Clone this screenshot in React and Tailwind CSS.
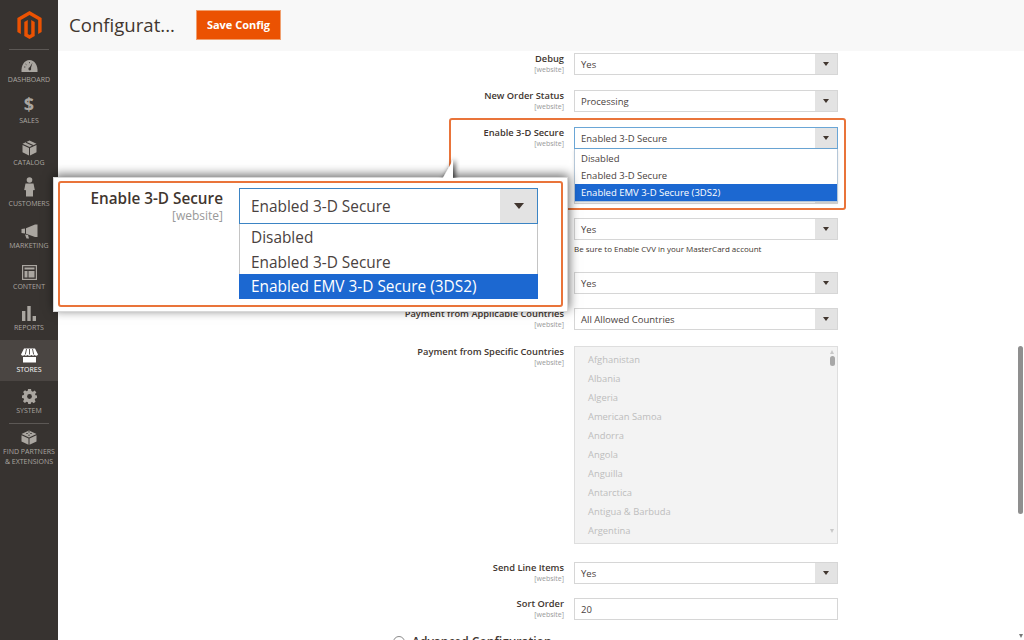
const nav = [
  { label: "DASHBOARD", icon: <DashIcon /> },
  { label: "SALES", icon: <span className="text-[18px] leading-[20px] font-bold">$</span> },
  { label: "CATALOG", icon: <BoxIcon /> },
  { label: "CUSTOMERS", icon: <PersonIcon /> },
  { label: "MARKETING", icon: <HornIcon /> },
  { label: "CONTENT", icon: <ContentIcon /> },
  { label: "REPORTS", icon: <BarsIcon /> },
  { label: "STORES", icon: <StoreIcon />, active: true },
  { label: "SYSTEM", icon: <GearIcon /> },
];

const countries = ["Afghanistan", "Albania", "Algeria", "American Samoa", "Andorra", "Angola", "Anguilla", "Antarctica", "Antigua & Barbuda", "Argentina"];

function DashIcon() {
  return (
    <svg width="17" height="14" viewBox="0 0 17 14">
      <path d="M0.5 13 C0 6 3.5 1 8.5 1 C13.5 1 17 6 16.5 13 Z" fill="currentColor" />
      <path d="M8 9.5 L11.5 3.5 L9.6 10.2 Z" fill="#373330" />
      <circle cx="8.8" cy="10" r="1.4" fill="#373330" />
      <path d="M3 8h1.4M4.5 5l1 .8M8.5 3v1.2" stroke="#373330" strokeWidth="0.8" />
    </svg>
  );
}

function BoxIcon() {
  return (
    <svg width="15" height="16" viewBox="0 0 15 16">
      <path d="M7.5 0.5 L14.5 3.8 L7.5 7 L0.5 3.8 Z" fill="currentColor" />
      <path d="M0.5 5 L7 8 V15.5 L0.5 12.2 Z" fill="currentColor" />
      <path d="M14.5 5 L8 8 V15.5 L14.5 12.2 Z" fill="currentColor" />
      <path d="M4 2.2 L11 5.4" stroke="#373330" strokeWidth="1.1" />
    </svg>
  );
}

function PersonIcon() {
  return (
    <svg width="11" height="20" viewBox="0 0 11 20">
      <circle cx="5.5" cy="3" r="2.8" fill="currentColor" />
      <path d="M1.5 6.5 H9.5 L10.8 13 L9 13.2 V19.5 H2 V13.2 L0.2 13 Z" fill="currentColor" />
    </svg>
  );
}

function HornIcon() {
  return (
    <svg width="17" height="15" viewBox="0 0 17 15">
      <path d="M0.5 5 L4 4.5 V9.5 L0.5 9 Z" fill="currentColor" />
      <path d="M5 4.3 L14 0.5 L16.5 0.5 V13 L14 13 L5 9.7 Z" fill="currentColor" />
      <path d="M4 10.5 L7 11 L8 14.5 L5.5 14.5 Z" fill="currentColor" />
    </svg>
  );
}

function ContentIcon() {
  return (
    <svg width="15" height="15" viewBox="0 0 15 15">
      <rect x="0.6" y="0.6" width="13.8" height="13.8" fill="none" stroke="currentColor" strokeWidth="1.2" />
      <rect x="2.5" y="2.5" width="10" height="2" fill="currentColor" />
      <rect x="2.5" y="6" width="3" height="6.5" fill="currentColor" />
      <rect x="6.5" y="6" width="6" height="6.5" fill="currentColor" />
    </svg>
  );
}

function BarsIcon() {
  return (
    <svg width="14" height="15" viewBox="0 0 14 15">
      <rect x="0" y="5" width="3.4" height="10" fill="currentColor" />
      <rect x="5.3" y="0" width="3.4" height="15" fill="currentColor" />
      <rect x="10.6" y="10" width="3.4" height="5" fill="currentColor" />
    </svg>
  );
}

function StoreIcon() {
  return (
    <svg width="17" height="15" viewBox="0 0 17 15">
      <path d="M3 0.5 H14 L17 6.5 C16 8 14.5 8 13.7 7 C12.8 8 11.4 8 10.6 7 C9.8 8 7.2 8 6.4 7 C5.6 8 4.2 8 3.3 7 C2.5 8 1 8 0 6.5 Z" fill="currentColor" />
      <path d="M5.5 1 L4.3 6.5 M8.5 1 V6.5 M11.5 1 L12.7 6.5" stroke="#4a4542" strokeWidth="0.9" />
      <path d="M2 9 H15 V14.5 H2 Z" fill="currentColor" />
    </svg>
  );
}

function GearIcon() {
  return (
    <svg width="15" height="15" viewBox="0 0 15 15">
      <path d="M6 0 H9 L9.4 2 L10.9 2.7 L12.7 1.6 L14.4 3.6 L13 5 L13.5 6.3 L15 6.5 V9 L13.3 9.4 L12.7 10.8 L13.6 12.5 L11.7 14.2 L10.1 13 L9 13.4 L8.7 15 H6.2 L5.9 13.3 L4.5 12.8 L2.9 14 L1 12.2 L2.1 10.6 L1.6 9.3 L0 9 V6.4 L1.7 6 L2.2 4.7 L1.1 3.1 L3 1.2 L4.6 2.3 L5.7 1.8 Z" fill="currentColor" />
      <circle cx="7.5" cy="7.5" r="2.4" fill="#373330" />
    </svg>
  );
}

function BrickIcon() {
  return (
    <svg width="16" height="15" viewBox="0 0 16 15">
      <path d="M8 0.5 L15.5 4 L8 7.5 L0.5 4 Z" fill="currentColor" />
      <path d="M0.5 5.2 L7.5 8.5 V14.8 L0.5 11.5 Z" fill="currentColor" />
      <path d="M15.5 5.2 L8.5 8.5 V14.8 L15.5 11.5 Z" fill="currentColor" />
      <path d="M5 3.5 h2 M9 3.5 h2 M7 5.2 h2 M7 1.9 h2" stroke="#373330" strokeWidth="0.7" />
    </svg>
  );
}

function Label({ title }) {
  return (
    <div className="w-[506px] text-right">
      <div className="text-[9.3px] leading-[12px] font-semibold text-[#41362f]">{title}</div>
      <div className="pt-[1px] text-[7px] leading-[8px] text-[#999]">[website]</div>
    </div>
  );
}

function Select({ value, focused }) {
  return (
    <div className={`flex h-[22px] w-[264px] items-stretch border ${focused ? "border-[#6aa6d6]" : "border-[#d6d6d6]"} bg-white`}>
      <div className="flex-1 pl-[6px] pt-[1px] text-[9.5px] leading-[20px] text-[#4a4240]">{value}</div>
      <div className="flex w-[22px] items-center justify-center bg-[#e3e3e3]">
        <div className="h-0 w-0 border-x-[3px] border-t-[4px] border-x-transparent border-t-[#41362f]" />
      </div>
    </div>
  );
}

function App() {
  return (
    <div className="flex h-[640px] w-[1024px] overflow-hidden bg-white font-['Open_Sans',sans-serif]">
      <aside className="flex w-[58px] shrink-0 flex-col bg-[#373330] text-[#aaa6a0]">
        <div className="flex h-[49px] shrink-0 items-start justify-center pt-[11px]">
          <svg width="25" height="28" viewBox="1.6 0 20.8 24" fill="#eb5202">
            <path d="M12 24l-4.455-2.572v-12l2.97-1.714v12.001l1.485.902 1.485-.902V7.714l2.971 1.714v12L12 24zM22.391 6v12l-2.97 1.714V7.714L12 3.43 4.574 7.714v12L1.609 18V6L12 0l10.391 6z" />
          </svg>
        </div>
        <div className="mx-[9px] h-px shrink-0 bg-[#5c5855]" />
        {nav.map((item) => (
          <div key={item.label} className={`flex h-[41.4px] shrink-0 flex-col items-center ${item.active ? "bg-[#4a4542] text-white" : ""}`}>
            <div className="flex h-[23px] items-end justify-center">{item.icon}</div>
            <div className="mt-[2px] text-[7px] leading-[10px]">{item.label}</div>
          </div>
        ))}
        <div className="mx-[9px] h-px shrink-0 bg-[#5c5855]" />
        <div className="flex flex-col items-center pt-[6px] text-center text-[7px] leading-[10px]">
          <BrickIcon />
          <div className="mt-[2px]">FIND PARTNERS</div>
          <div>&amp; EXTENSIONS</div>
        </div>
      </aside>

      <div className="flex min-w-0 flex-1 flex-col">
        <header className="flex h-[51px] shrink-0 items-center bg-[#f8f8f8] pb-[1px] pl-[11px]">
          <h1 className="w-[105px] whitespace-nowrap text-[18.6px] leading-[28px] text-[#41362f]">Configurat...</h1>
          <button className="ml-[22px] h-[30px] w-[85px] border border-[#f0a070] bg-[#eb5202] text-[11px] font-bold text-white">Save Config</button>
        </header>

        <main className="relative min-h-0 flex-1 pt-[2px]">
          <div className="flex gap-[10px]">
            <Label title="Debug" />
            <Select value="Yes" />
          </div>
          <div className="mt-[15px] flex gap-[10px]">
            <Label title="New Order Status" />
            <Select value="Processing" />
          </div>
          <div className="mt-[15px] flex gap-[10px]">
            <Label title="Enable 3-D Secure" />
            <div className="relative z-10">
              <Select value="Enabled 3-D Secure" focused />
              <div className="absolute left-0 top-[22px] h-[53px] w-[264px] border-x border-b border-[#b5c7d8] bg-white pt-[1px] text-[9.5px] leading-[17px] text-[#4a4240] shadow-sm">
                <div className="pl-[6px]">Disabled</div>
                <div className="pl-[6px]">Enabled 3-D Secure</div>
                <div className="bg-[#1c68d1] pl-[6px] text-white">Enabled EMV 3-D Secure (3DS2)</div>
              </div>
            </div>
          </div>
          <div className="mt-[33px] flex gap-[10px]">
            <Label title="Test Mode" />
            <Select value="Yes" />
          </div>
          <div className="mt-[14px] flex gap-[10px]">
            <Label title="CVV Verification" />
            <div>
              <Select value="Yes" />
              <div className="mt-[3px] text-[8px] leading-[11px] text-[#41362f]">Be sure to Enable CVV in your MasterCard account</div>
            </div>
          </div>
          <div className="mt-[18px] flex gap-[10px]">
            <Label title="Credit Card Verification" />
            <Select value="Yes" />
          </div>
          <div className="mt-[14px] flex gap-[10px]">
            <Label title="Payment from Applicable Countries" />
            <Select value="All Allowed Countries" />
          </div>
          <div className="mt-[16px] flex gap-[10px]">
            <Label title="Payment from Specific Countries" />
            <div className="relative h-[198px] w-[264px] border border-[#dedede] bg-[#f3f3f3] pl-[13px] pt-[3px] text-[9.4px] leading-[19px] text-[#bdbdbd]">
              {countries.map((c) => (
                <div key={c}>{c}</div>
              ))}
              <div className="absolute right-[3px] top-[3px] h-0 w-0 border-x-[2.5px] border-b-[4px] border-x-transparent border-b-[#c8c8c8]" />
              <div className="absolute right-[2px] top-[9px] h-[10px] w-[5px] rounded-sm bg-[#a8a8a8]" />
              <div className="absolute bottom-[10px] right-[3px] h-0 w-0 border-x-[2.5px] border-t-[4px] border-x-transparent border-t-[#c8c8c8]" />
            </div>
          </div>
          <div className="mt-[18px] flex gap-[10px]">
            <Label title="Send Line Items" />
            <Select value="Yes" />
          </div>
          <div className="mt-[14px] flex gap-[10px]">
            <Label title="Sort Order" />
            <div className="h-[22px] w-[264px] border border-[#d6d6d6] bg-white pl-[6px] pt-[1px] text-[9.5px] leading-[20px] text-[#4a4240]">20</div>
          </div>
          <div className="mt-[15px] flex items-center pl-[335px]">
            <div className="h-[12px] w-[12px] rounded-full border border-[#8a8a8a]" />
            <div className="ml-[7px] text-[12px] leading-[14px] font-semibold text-[#41362f]">Advanced Configuration</div>
          </div>

          {/* orange highlight around the real field */}
          <div className="pointer-events-none absolute left-[391px] top-[67px] z-20 h-[92px] w-[397px] rounded-[3px] border-2 border-[#e9743a]" />

          {/* zoomed callout */}
          <div className="absolute left-[-5px] top-[126px] z-30 h-[135px] w-[515px] border border-[#d8d8d8] bg-white pb-[4px] pl-[4px] pr-[4px] pt-[3px] shadow-[1px_-2px_10px_rgba(0,0,0,0.6)]">
            <svg className="absolute left-[366px] top-[-31px]" width="40" height="31" viewBox="0 0 40 31">
              <defs>
                <filter id="tip" x="0" y="0" width="40" height="40" filterUnits="userSpaceOnUse">
                  <feDropShadow dx="2" dy="-1" stdDeviation="2.5" floodColor="#000" floodOpacity="0.75" />
                </filter>
              </defs>
              <path d="M20 36 L33 13 V36 Z" fill="#fff" filter="url(#tip)" />
            </svg>
            <div className="flex h-[126px] rounded-[3px] border-2 border-[#e9743a] pl-[30px] pt-[5px]">
              <div className="w-[133px] whitespace-nowrap text-right">
                <div className="text-[15.3px] leading-[20px] font-semibold text-[#41362f]">Enable 3-D Secure</div>
                <div className="text-[12px] leading-[15px] text-[#999]">[website]</div>
              </div>
              <div className="ml-[16px] w-[299px]">
                <div className="flex h-[36px] items-stretch border border-[#3b84c4]">
                  <div className="flex-1 pl-[11px] pt-[1px] text-[15.4px] leading-[34px] text-[#4a4240]">Enabled 3-D Secure</div>
                  <div className="flex w-[37px] items-center justify-center bg-[#e3e3e3]">
                    <div className="h-0 w-0 border-x-[5px] border-t-[6px] border-x-transparent border-t-[#41362f]" />
                  </div>
                </div>
                <div className="h-[75px] border-x border-[#c4c4c4] text-[15.4px] leading-[25px] text-[#4a4240]">
                  <div className="h-[25px] pl-[11px] pt-[1px]">Disabled</div>
                  <div className="h-[25px] pl-[11px] pt-[1px]">Enabled 3-D Secure</div>
                  <div className="-mx-px bg-[#1c68d1] pl-[12px] text-white">Enabled EMV 3-D Secure (3DS2)</div>
                </div>
              </div>
            </div>
          </div>

          {/* page scrollbar */}
          <div className="absolute right-[1px] top-[295px] h-[168px] w-[5px] rounded-sm bg-[#8f8f8f]" />
          <div className="absolute bottom-[2px] right-[1px] h-0 w-0 border-x-[2.5px] border-t-[4px] border-x-transparent border-t-[#777]" />
        </main>
      </div>
    </div>
  );
}

export default App;
